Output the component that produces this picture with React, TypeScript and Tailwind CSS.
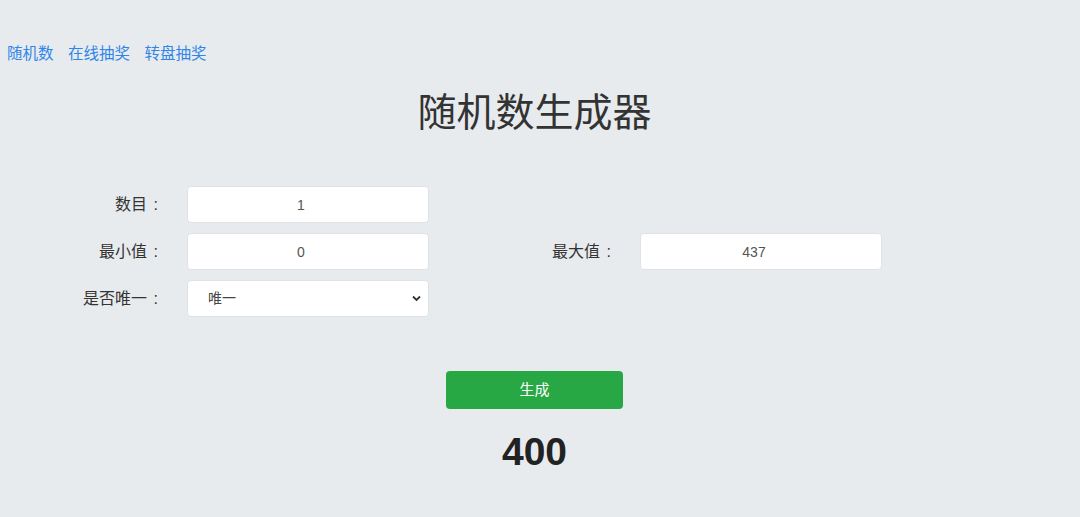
import { ReactNode } from 'react'

const font = {
  fontFamily: '"Liberation Sans", "Noto Sans CJK SC", sans-serif',
}

function Field({ label, children }: { label: string; children: ReactNode }) {
  return (
    <div className="flex items-center gap-[27px]">
      <label className="flex w-[160px] justify-end text-[16px] text-[#333]">
        <span>{label}</span>
        <span className="w-[13px] pr-[2px] text-right">:</span>
      </label>
      {children}
    </div>
  )
}

function TextInput({ value }: { value: string }) {
  return (
    <input
      readOnly
      value={value}
      className="h-[37px] w-[242px] rounded-[4px] border border-[#dfe3e7] bg-white pr-[14px] text-center text-[14px] text-[#555] outline-none"
    />
  )
}

export default function App() {
  return (
    <div className="min-h-[517px] w-full bg-[#e8ebee]" style={font}>
      <nav className="flex gap-[14.5px] pl-[7px] pt-[44px] text-[15.5px] leading-[20px] text-[#2f86e8]">
        <a href="#">随机数</a>
        <a href="#">在线抽奖</a>
        <a href="#">转盘抽奖</a>
      </nav>

      <div className="w-[1069px]">
        <h1 className="mt-[25px] text-center text-[39px] leading-[48px] text-[#333]">随机数生成器</h1>

        <div className="mt-[49px] grid w-[906px] grid-cols-2 gap-y-[10px]">
          <Field label="数目">
            <TextInput value="1" />
          </Field>
          <div />
          <Field label="最小值">
            <TextInput value="0" />
          </Field>
          <Field label="最大值">
            <TextInput value="437" />
          </Field>
          <Field label="是否唯一">
            <div className="relative h-[37px] w-[242px]">
              <select className="h-full w-full appearance-none rounded-[4px] border border-[#dfe3e7] bg-white pl-[20px] text-[14px] text-[#444] outline-none">
                <option>唯一</option>
                <option>不唯一</option>
              </select>
              <svg
                className="pointer-events-none absolute right-[8px] top-[15px]"
                width="9"
                height="7"
                viewBox="0 0 9 7"
              >
                <path d="M1 1.5 L4.5 5 L8 1.5" stroke="#333" strokeWidth="1.8" fill="none" />
              </svg>
            </div>
          </Field>
          <div />
        </div>

        <div className="mt-[54px] flex justify-center">
          <button className="h-[38px] w-[177px] rounded-[4px] bg-[#28a745] text-[15px] text-white">生成</button>
        </div>

        <div className="mt-[19px] text-center text-[39px] font-bold leading-[48px] text-[#222]">400</div>
      </div>
    </div>
  )
}
